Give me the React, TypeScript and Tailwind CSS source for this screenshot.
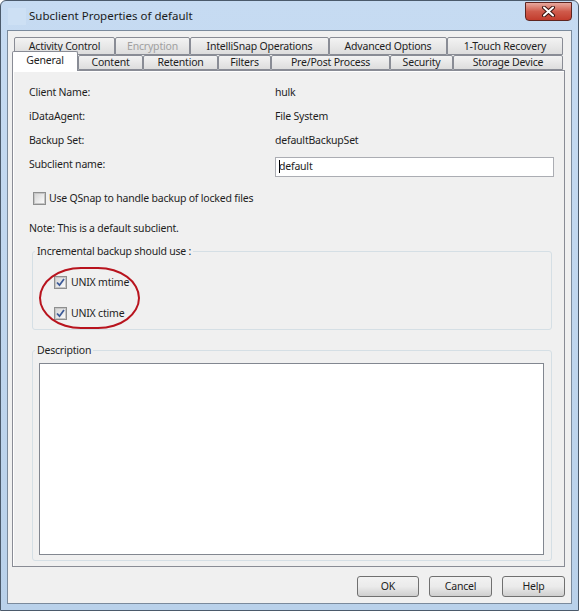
import React from 'react';

const font = { fontFamily: '"Noto Sans", "Open Sans", sans-serif' };

const Checkbox: React.FC<{ checked?: boolean }> = ({ checked }) => (
  <span className="w-[13px] h-[13px] shrink-0 border border-[#8e8f8f] bg-white flex items-center justify-center">
    <span className="w-[11px] h-[11px] border border-[#c5c5c5] bg-gradient-to-br from-[#d6d6d6] to-[#fbfbfb] flex items-center justify-center">
      {checked && (
        <svg width="9" height="9" viewBox="0 0 9 9">
          <path d="M1 4.5 L3.5 7.2 L8 1" fill="none" stroke="#3c5a98" strokeWidth="1.8" />
        </svg>
      )}
    </span>
  </span>
);

const Tab: React.FC<{ label: string; w: string; disabled?: boolean; active?: boolean }> = ({ label, w, disabled, active }) => (
  <div
    className={`${w} shrink-0 flex items-center justify-center border border-[#898c95] rounded-t-[2px] text-[10.5px] tracking-[-0.2px] leading-none ${
      active
        ? 'h-[20px] self-end bg-white border-b-0 -mb-[1px] relative z-10 pb-[2px]'
        : 'h-full bg-gradient-to-b from-[#f3f3f3] to-[#dddddd]'
    } ${disabled ? 'text-[#a0a0a0]' : 'text-[#1e1e1e]'}`}
  >
    {label}
  </div>
);

const Button: React.FC<{ label: string; w: string }> = ({ label, w }) => (
  <button className={`${w} h-[21px] rounded-[3px] border border-[#707070] bg-gradient-to-b from-[#f2f2f2] via-[#ebebeb] to-[#cfcfcf] text-[10.5px] tracking-[-0.2px] text-[#1e1e1e] leading-none`}>
    {label}
  </button>
);

export default function App() {
  return (
    <div className="w-[579px] h-[611px] bg-white" style={font}>
      <div className="w-full h-full flex flex-col rounded-t-[6px] border border-[#4b5a6b] bg-gradient-to-b from-[#c6dbf2] to-[#b9d1ea]">
        {/* Title bar */}
        <div className="h-[29px] flex items-start shrink-0">
          <div className="w-[18px] h-[17px] ml-[7px] mt-[7px] bg-[#cde0f4]" />
          <span className="ml-[3px] mt-[7px] text-[11.5px] leading-[16px] text-[#1b1b1b]">Subclient Properties of default</span>
          <div className="ml-auto mr-[6px] mt-[1px] w-[47px] h-[19px] rounded-b-[4px] border border-[#5e2520] bg-gradient-to-b from-[#e7a89e] via-[#cf5a4b] to-[#c23c2d] flex items-center justify-center">
            <svg width="15" height="11" viewBox="0 0 15 11">
              <path d="M3 1.5 L12 9.5 M12 1.5 L3 9.5" stroke="#3a1410" strokeWidth="4" strokeLinecap="round" />
              <path d="M3 1.5 L12 9.5 M12 1.5 L3 9.5" stroke="#ffffff" strokeWidth="2" strokeLinecap="round" />
            </svg>
          </div>
        </div>

        {/* Client area */}
        <div className="mx-[6px] mb-[6px] flex-1 border border-[#7a8a9c] bg-[#f0f0f0] flex flex-col">
          {/* Tabs */}
          <div className="pt-[6px] shrink-0">
            <div className="flex h-[18px] ml-[6px]">
              <Tab label="Activity Control" w="w-[101px]" />
              <Tab label="Encryption" w="w-[75px]" disabled />
              <Tab label="IntelliSnap Operations" w="w-[139px]" />
              <Tab label="Advanced Options" w="w-[118px]" />
              <Tab label="1-Touch Recovery" w="w-[116px]" />
            </div>
            <div className="flex h-[15px] ml-[4px] items-end">
              <Tab label="General" w="w-[66px]" active />
              <Tab label="Content" w="w-[65px]" />
              <Tab label="Retention" w="w-[75px]" />
              <Tab label="Filters" w="w-[53px]" />
              <Tab label="Pre/Post Process" w="w-[119px]" />
              <Tab label="Security" w="w-[63px]" />
              <Tab label="Storage Device" w="w-[110px]" />
            </div>
          </div>

          {/* Panel */}
          <div className="ml-[4px] w-[553px] h-[497px] border border-[#898c95] bg-[#f0f0f0] shadow-[inset_1px_1px_0_#ffffff] pt-[9px] pl-[16px] text-[10.5px] tracking-[-0.2px] text-[#1e1e1e] leading-none flex flex-col">
            <div className="flex items-center h-[24px]">
              <span className="w-[246px]">Client Name:</span>
              <span>hulk</span>
            </div>
            <div className="flex items-center h-[24px]">
              <span className="w-[246px]">iDataAgent:</span>
              <span>File System</span>
            </div>
            <div className="flex items-center h-[24px]">
              <span className="w-[246px]">Backup Set:</span>
              <span>defaultBackupSet</span>
            </div>
            <div className="flex items-center h-[24px]">
              <span className="w-[246px]">Subclient name:</span>
              <div className="mt-[5px] w-[279px] h-[20px] border border-[#abadb3] bg-white flex items-center pl-[3px]">
                <span className="w-px h-[13px] bg-black -mr-px" />
                <span>default</span>
              </div>
            </div>

            <div className="flex items-center h-[24px] mt-[10px] ml-[4px] gap-[3px]">
              <Checkbox />
              <span>Use QSnap to handle backup of locked files</span>
            </div>

            <div className="flex items-center h-[24px] mt-[6px]">
              <span>Note: This is a default subclient.</span>
            </div>

            <fieldset className="mt-[3px] ml-[3px] w-[520px] h-[87px] border border-[#d5dfe5] rounded-[3px]">
              <legend className="ml-[2px] px-[2px] h-[16px] leading-[16px]">Incremental backup should use :</legend>
              <div className="relative flex flex-col pl-[21px] pt-[13px] gap-[11px]">
                <div className="flex items-center h-[20px] gap-[4px]">
                  <Checkbox checked />
                  <span>UNIX mtime</span>
                </div>
                <div className="flex items-center h-[20px] gap-[4px]">
                  <Checkbox checked />
                  <span>UNIX ctime</span>
                </div>
                {/* annotation ellipse */}
                <div className="absolute left-[6px] top-[8px] w-[101px] h-[62px] rounded-[42px/31px] border-2 border-[#b8141e]" />
              </div>
            </fieldset>

            <fieldset className="mt-[12px] ml-[3px] w-[520px] h-[219px] border border-[#d5dfe5] rounded-[3px] pl-[6px]">
              <legend className="ml-[-4px] px-[2px] h-[16px] leading-[16px]">Description</legend>
              <div className="mt-[5px] w-[505px] h-[192px] border border-[#828790] bg-white" />
            </fieldset>
          </div>

          {/* Buttons */}
          <div className="flex justify-end gap-[10px] mt-[9px] pr-[6px]">
            <Button label="OK" w="w-[62px]" />
            <Button label="Cancel" w="w-[63px]" />
            <Button label="Help" w="w-[63px]" />
          </div>
        </div>
      </div>
    </div>
  );
}
